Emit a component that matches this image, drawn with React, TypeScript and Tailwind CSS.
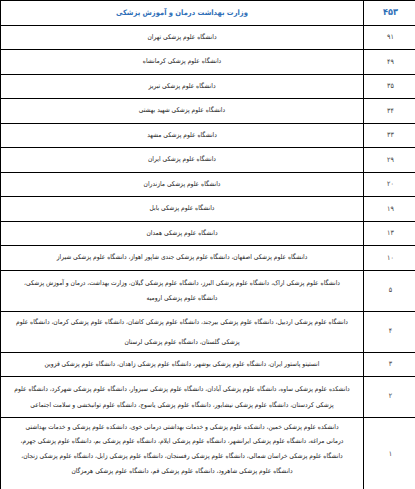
import React from "react";

type Row = {
  num: string;
  lines: string[];
  h: string;
  lh: string;
  top?: boolean;
};

const rows: Row[] = [
  { num: "۹۱", lines: ["دانشگاه علوم پزشکی تهران"], h: "h-[24.5px]", lh: "leading-[15px]" },
  { num: "۴۹", lines: ["دانشگاه علوم پزشکی کرمانشاه"], h: "h-[24.5px]", lh: "leading-[15px]" },
  { num: "۳۵", lines: ["دانشگاه علوم پزشکی تبریز"], h: "h-[24.5px]", lh: "leading-[15px]" },
  { num: "۳۴", lines: ["دانشگاه علوم پزشکی شهید بهشتی"], h: "h-[24.5px]", lh: "leading-[15px]" },
  { num: "۳۳", lines: ["دانشگاه علوم پزشکی مشهد"], h: "h-[24.5px]", lh: "leading-[15px]" },
  { num: "۲۹", lines: ["دانشگاه علوم پزشکی ایران"], h: "h-[24.5px]", lh: "leading-[15px]" },
  { num: "۲۰", lines: ["دانشگاه علوم پزشکی مازندران"], h: "h-[24.5px]", lh: "leading-[15px]" },
  { num: "۱۹", lines: ["دانشگاه علوم پزشکی بابل"], h: "h-[24.5px]", lh: "leading-[15px]" },
  { num: "۱۳", lines: ["دانشگاه علوم پزشکی همدان"], h: "h-[24.5px]", lh: "leading-[15px]" },
  {
    num: "۱۰",
    lines: ["دانشگاه علوم پزشکی اصفهان، دانشگاه علوم پزشکی جندی شاپور اهواز، دانشگاه علوم پزشکی شیراز"],
    h: "h-[24.5px]",
    lh: "leading-[15px]",
  },
  {
    num: "۵",
    lines: [
      "دانشگاه علوم پزشکی اراک، دانشگاه علوم پزشکی البرز، دانشگاه علوم پزشکی گیلان، وزارت بهداشت، درمان و آموزش پزشکی،",
      "دانشگاه علوم پزشکی ارومیه",
    ],
    h: "h-[41px]",
    lh: "leading-[15px]",
  },
  {
    num: "۴",
    lines: [
      "دانشگاه علوم پزشکی اردبیل، دانشگاه علوم پزشکی بیرجند، دانشگاه علوم پزشکی کاشان، دانشگاه علوم پزشکی کرمان، دانشگاه علوم",
      "پزشکی گلستان، دانشگاه علوم پزشکی لرستان",
    ],
    h: "h-[41px]",
    lh: "leading-[20px]",
  },
  {
    num: "۳",
    lines: ["انستیتو پاستور ایران، دانشگاه علوم پزشکی بوشهر، دانشگاه علوم پزشکی زاهدان، دانشگاه علوم پزشکی قزوین"],
    h: "h-[24px]",
    lh: "leading-[15px]",
  },
  {
    num: "۲",
    lines: [
      "دانشکده علوم پزشکی ساوه، دانشگاه علوم پزشکی آبادان، دانشگاه علوم پزشکی سبزوار، دانشگاه علوم پزشکی شهرکرد، دانشگاه علوم",
      "پزشکی کردستان، دانشگاه علوم پزشکی نیشابور، دانشگاه علوم پزشکی یاسوج، دانشگاه علوم توانبخشی و سلامت اجتماعی",
    ],
    h: "h-[41px]",
    lh: "leading-[16px]",
  },
  {
    num: "۱",
    lines: [
      "دانشکده علوم پزشکی خمین، دانشکده علوم پزشکی و خدمات بهداشتی درمانی خوی، دانشکده علوم پزشکی و خدمات بهداشتی",
      "درمانی مراغه، دانشگاه علوم پزشکی ایرانشهر، دانشگاه علوم پزشکی ایلام، دانشگاه علوم پزشکی بم، دانشگاه علوم پزشکی جهرم،",
      "دانشگاه علوم پزشکی خراسان شمالی، دانشگاه علوم پزشکی رفسنجان، دانشگاه علوم پزشکی زابل، دانشگاه علوم پزشکی زنجان،",
      "دانشگاه علوم پزشکی شاهرود، دانشگاه علوم پزشکی قم، دانشگاه علوم پزشکی هرمزگان",
    ],
    h: "h-[75px]",
    lh: "leading-[14.7px]",
    top: true,
  },
];

export default function App() {
  return (
    <div className="w-[415px] h-[489px] overflow-hidden bg-white">
      <div
        dir="rtl"
        className="w-[417px] border-l border-t border-black font-['DejaVu_Sans_Condensed','DejaVu_Sans',sans-serif] text-[#1c1c1c]"
      >
        <div className="flex h-[24.5px] border-b border-black">
          <div className="w-[54px] shrink-0 border-l border-black flex items-center justify-center text-[9px] font-bold text-[#2f6fb8]">
            ۴۵۳
          </div>
          <div className="flex-1 flex items-center justify-center text-[7.5px] font-bold text-[#2f6fb8]">
            وزارت بهداشت درمان و آموزش پزشکی
          </div>
        </div>
        {rows.map((r) => (
          <div key={r.num} className={`flex border-b border-black ${r.h}`}>
            <div className="w-[54px] shrink-0 border-l border-black flex items-center justify-center text-[7px] text-[#444444]">
              {r.num}
            </div>
            <div
              className={`flex-1 flex flex-col items-center text-[6.6px] ${r.lh} ${
                r.top ? "justify-start pt-[2px]" : "justify-center"
              }`}
            >
              {r.lines.map((l, i) => (
                <div key={i} className="whitespace-nowrap">
                  {l}
                </div>
              ))}
            </div>
          </div>
        ))}
      </div>
    </div>
  );
}
